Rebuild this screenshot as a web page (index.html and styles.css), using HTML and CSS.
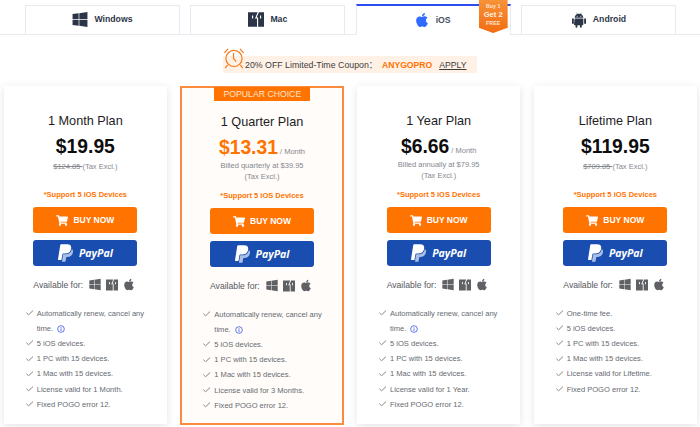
FILE: index.html
```html
<!DOCTYPE html>
<html lang="en">
<head>
    <meta charset="UTF-8">
    <meta name="viewport" content="width=device-width, initial-scale=1.0">
    <title>AnyGo Pricing</title>
    <link rel="stylesheet" href="styles.css">
</head>
<body>
    <svg class="icon-defs" width="0" height="0" aria-hidden="true">
        <symbol id="i-windows" viewBox="0 0 448 512"><path d="M0 93.7l183.6-25.3v177.4H0V93.7zm0 324.6l183.6 25.3V268.4H0v149.9zm203.8 28L448 480V268.4H203.8v177.9zm0-380.6v180.1H448V32L203.8 65.7z"/></symbol>
        <symbol id="i-apple" viewBox="0 0 384 512"><path d="M318.7 268.7c-.2-36.7 16.4-64.4 50-84.8-18.8-26.9-47.2-41.7-84.7-44.6-35.5-2.8-74.3 20.7-88.5 20.7-15 0-49.4-19.7-76.4-19.7C63.3 141.2 4 184.8 4 273.5q0 39.3 14.4 81.2c12.8 36.7 59 126.7 107.2 125.2 25.2-.6 43-17.9 75.8-17.9 31.8 0 48.3 17.9 76.4 17.9 48.6-.7 90.4-82.5 102.6-119.3-65.2-30.7-61.7-90-61.7-91.9zm-56.6-164.2c27.3-32.4 24.8-61.9 24-72.5-24.1 1.4-52 16.4-67.9 34.9-17.5 19.8-27.8 44.3-25.6 71.9 26.1 2 49.9-11.4 69.5-34.3z"/></symbol>
        <symbol id="i-mac" viewBox="0 0 24 24"><path fill-rule="evenodd" d="M0 1h24v22H0zM14.500 1l-4 9.500h3V23h1.700V9h-2.200L16.300 1zM6 6v4.500h1.700V6zM18 6v4.500h1.700V6z"/></symbol>
        <symbol id="i-android" viewBox="0 0 24 24"><path d="M5.500 9.500C5.700 6.900 7.200 4.900 9.300 3.900L8.100 1.800l.5-.3 1.300 2.100c1.300-.5 2.900-.5 4.200 0l1.300-2.100.5.300-1.200 2.100c2.100 1 3.600 3 3.800 5.600zM9.300 6.200a.8.8 0 100 1.600.8.8 0 000-1.600zm5.400 0a.8.800 0 100 1.600.8.8 0 000-1.600zM5.500 10.400h13v8.700c0 .8-.6 1.400-1.400 1.400h-.9V23a1.400 1.400 0 01-2.800 0v-2.500h-3.800V23a1.400 1.400 0 01-2.800 0v-2.500h-.9c-.8 0-1.400-.6-1.400-1.400zM2.900 10.200c.8 0 1.400.6 1.400 1.400v5.600a1.400 1.400 0 01-2.800 0v-5.600c0-.8.6-1.400 1.400-1.400zm18.200 0c.8 0 1.400.6 1.400 1.400v5.600a1.400 1.400 0 01-2.800 0v-5.600c0-.8.6-1.400 1.400-1.400z"/></symbol>
        <symbol id="i-cart" viewBox="0 0 576 512"><path d="M528.12 301.319l47.273-208C578.806 78.301 567.391 64 551.99 64H159.208l-9.166-44.81C147.758 8.021 137.93 0 126.529 0H24C10.745 0 0 10.745 0 24v16c0 13.255 10.745 24 24 24h69.883l70.248 343.435C147.325 417.1 136 435.222 136 456c0 30.928 25.072 56 56 56s56-25.072 56-56c0-15.674-6.447-29.835-16.824-40h209.647C430.447 426.165 424 440.326 424 456c0 30.928 25.072 56 56 56s56-25.072 56-56c0-22.172-12.888-41.332-31.579-50.405l5.517-24.276c3.413-15.018-8.002-29.319-23.403-29.319H218.117l-6.545-32h293.145c11.206 0 20.92-7.754 23.403-18.681z"/></symbol>
        <symbol id="i-paypal" viewBox="0 0 384 512">
            <path fill="#a9bfe6" d="M357.1 152c-1.800-1.300-2.500-1.800-3 1.300-2 11.400-5.100 22.500-8.800 33.600-39.900 113.800-150.500 103.900-204.500 103.900-6.100 0-10.100 3.300-10.900 9.400-22.600 140.400-27.100 169.700-27.100 169.700-1 7.100 3.500 12.900 10.600 12.900h63.500c8.600 0 15.700-6.300 17.400-14.900.7-5.400-1.100 6.100 14.400-91.300 4.600-22 14.300-19.700 29.300-19.700 71 0 126.400-28.800 142.900-112.300 6.500-34.800 4.600-71.400-23.800-92.600z"/>
            <path fill="#fff" d="M111.400 295.900c-3.500 19.200-17.400 108.700-21.500 134-.3 1.800-1 2.500-3 2.500H12.300c-7.600 0-13.100-6.600-12.100-13.900L58.800 46.600c1.500-9.600 10.100-16.900 20-16.900 152.300 0 165.100-3.700 204 11.400 60.100 23.300 65.600 79.500 44 140.300-21.500 62.600-72.500 89.500-140.100 90.300-43.400.7-69.500-7-75.300 24.200z"/>
        </symbol>
        <symbol id="i-check" viewBox="0 0 8 6"><path d="M.4 3l2.300 2.300L7.600.6" fill="none" stroke="currentColor" stroke-width=".8"/></symbol>
        <symbol id="i-info" viewBox="0 0 12 12"><circle cx="6" cy="6" r="5" fill="none" stroke="currentColor" stroke-width="1.200"/><path d="M5.400 5h1.200v4H5.400zM5.400 3h1.200v1.200H5.400z"/></symbol>
    </svg>

    <!-- os tabs -->
    <nav class="tabs">
        <a class="tab"><svg class="tab-icon"><use href="#i-windows"/></svg>Windows</a>
        <a class="tab"><svg class="tab-icon"><use href="#i-mac"/></svg>Mac</a>
        <a class="tab tab-active"><svg class="tab-icon"><use href="#i-apple"/></svg>iOS
            <span class="promo-badge"><span class="promo-small">Buy 1</span><span class="promo-big">Get 2</span><span class="promo-small">FREE</span></span>
        </a>
        <a class="tab"><svg class="tab-icon"><use href="#i-android"/></svg>Android</a>
    </nav>

    <!-- coupon -->
    <div class="coupon-row">
        <div class="coupon">
            <svg class="coupon-clock" viewBox="0 0 24 24" fill="none" stroke="#f57a1c" stroke-width="1.300">
                <circle cx="12" cy="12.500" r="8.800"/>
                <path d="M11.500 6.500v6l3 3.500M1.500 6.500L5.500 2M22.500 6.500L18.500 2M5 19.500L2.500 23M19 19.500L21.500 23"/>
            </svg>
            <span class="coupon-text">20% OFF Limited-Time Coupon：</span>
            <strong class="coupon-code">ANYGOPRO</strong>
            <a class="coupon-apply">APPLY</a>
        </div>
    </div>

    <!-- plans -->
    <main class="plans">
        <section class="plan">
            <h2 class="plan-name">1 Month Plan</h2>
            <div class="plan-price"><b>$19.95</b></div>
            <p class="plan-note plan-note-single"><s>$124.85 </s>(Tax Excl.)</p>
            <p class="plan-support">*Support 5 iOS Devices</p>
            <a class="btn btn-buy"><svg class="cart"><use href="#i-cart"/></svg>BUY NOW</a>
            <a class="btn btn-paypal"><svg class="pp"><use href="#i-paypal"/></svg><em>PayPal</em></a>
            <div class="avail">Available for:
                <svg class="a-win"><use href="#i-windows"/></svg><svg class="a-mac"><use href="#i-mac"/></svg><svg class="a-apple"><use href="#i-apple"/></svg>
            </div>
            <ul class="features">
                <li><svg class="check"><use href="#i-check"/></svg>Automatically renew, cancel any time. <svg class="info"><use href="#i-info"/></svg></li>
                <li><svg class="check"><use href="#i-check"/></svg>5 iOS devices.</li>
                <li><svg class="check"><use href="#i-check"/></svg>1 PC with 15 devices.</li>
                <li><svg class="check"><use href="#i-check"/></svg>1 Mac with 15 devices.</li>
                <li><svg class="check"><use href="#i-check"/></svg>License valid for 1 Month.</li>
                <li><svg class="check"><use href="#i-check"/></svg>Fixed POGO error 12.</li>
            </ul>
        </section>

        <section class="plan plan-popular">
            <div class="popular-flag">POPULAR CHOICE</div>
            <h2 class="plan-name">1 Quarter Plan</h2>
            <div class="plan-price"><b>$13.31</b><span> / Month</span></div>
            <p class="plan-note">Billed quarterly at $39.95<br>(Tax Excl.)</p>
            <p class="plan-support">*Support 5 iOS Devices</p>
            <a class="btn btn-buy"><svg class="cart"><use href="#i-cart"/></svg>BUY NOW</a>
            <a class="btn btn-paypal"><svg class="pp"><use href="#i-paypal"/></svg><em>PayPal</em></a>
            <div class="avail">Available for:
                <svg class="a-win"><use href="#i-windows"/></svg><svg class="a-mac"><use href="#i-mac"/></svg><svg class="a-apple"><use href="#i-apple"/></svg>
            </div>
            <ul class="features">
                <li><svg class="check"><use href="#i-check"/></svg>Automatically renew, cancel any time. <svg class="info"><use href="#i-info"/></svg></li>
                <li><svg class="check"><use href="#i-check"/></svg>5 iOS devices.</li>
                <li><svg class="check"><use href="#i-check"/></svg>1 PC with 15 devices.</li>
                <li><svg class="check"><use href="#i-check"/></svg>1 Mac with 15 devices.</li>
                <li><svg class="check"><use href="#i-check"/></svg>License valid for 3 Months.</li>
                <li><svg class="check"><use href="#i-check"/></svg>Fixed POGO error 12.</li>
            </ul>
        </section>

        <section class="plan">
            <h2 class="plan-name">1 Year Plan</h2>
            <div class="plan-price"><b>$6.66</b><span> / Month</span></div>
            <p class="plan-note">Billed annually at $79.95<br>(Tax Excl.)</p>
            <p class="plan-support">*Support 5 iOS Devices</p>
            <a class="btn btn-buy"><svg class="cart"><use href="#i-cart"/></svg>BUY NOW</a>
            <a class="btn btn-paypal"><svg class="pp"><use href="#i-paypal"/></svg><em>PayPal</em></a>
            <div class="avail">Available for:
                <svg class="a-win"><use href="#i-windows"/></svg><svg class="a-mac"><use href="#i-mac"/></svg><svg class="a-apple"><use href="#i-apple"/></svg>
            </div>
            <ul class="features">
                <li><svg class="check"><use href="#i-check"/></svg>Automatically renew, cancel any time. <svg class="info"><use href="#i-info"/></svg></li>
                <li><svg class="check"><use href="#i-check"/></svg>5 iOS devices.</li>
                <li><svg class="check"><use href="#i-check"/></svg>1 PC with 15 devices.</li>
                <li><svg class="check"><use href="#i-check"/></svg>1 Mac with 15 devices.</li>
                <li><svg class="check"><use href="#i-check"/></svg>License valid for 1 Year.</li>
                <li><svg class="check"><use href="#i-check"/></svg>Fixed POGO error 12.</li>
            </ul>
        </section>

        <section class="plan">
            <h2 class="plan-name">Lifetime Plan</h2>
            <div class="plan-price"><b>$119.95</b></div>
            <p class="plan-note plan-note-single"><s>$709.85 </s>(Tax Excl.)</p>
            <p class="plan-support">*Support 5 iOS Devices</p>
            <a class="btn btn-buy"><svg class="cart"><use href="#i-cart"/></svg>BUY NOW</a>
            <a class="btn btn-paypal"><svg class="pp"><use href="#i-paypal"/></svg><em>PayPal</em></a>
            <div class="avail">Available for:
                <svg class="a-win"><use href="#i-windows"/></svg><svg class="a-mac"><use href="#i-mac"/></svg><svg class="a-apple"><use href="#i-apple"/></svg>
            </div>
            <ul class="features">
                <li><svg class="check"><use href="#i-check"/></svg>One-time fee.</li>
                <li><svg class="check"><use href="#i-check"/></svg>5 iOS devices.</li>
                <li><svg class="check"><use href="#i-check"/></svg>1 PC with 15 devices.</li>
                <li><svg class="check"><use href="#i-check"/></svg>1 Mac with 15 devices.</li>
                <li><svg class="check"><use href="#i-check"/></svg>License valid for Lifetime.</li>
                <li><svg class="check"><use href="#i-check"/></svg>Fixed POGO error 12.</li>
            </ul>
        </section>
    </main>
</body>
</html>
```

FILE: styles.css
```css
:root {
    --orange: #ff7300;
    --line: #e8eaef;
    --ink: #2c3547;
    --grey: #85888f;
    --body: #666a71;
}

* {
    box-sizing: border-box;
    margin: 0;
    padding: 0;
}

html, body {
    height: 427px;
    overflow: hidden;
}

body {
    background: #fff;
    color: var(--body);
    font-family: 'Liberation Sans', Arial, 'Noto Sans CJK SC', sans-serif;
}

.icon-defs {
    display: block;
    height: 0;
}

/* tabs */
.tabs {
    display: grid;
    grid-template-columns: repeat(4, 155px);
    column-gap: 10.330px;
    padding: 5px 0 0 25px;
    height: 35px;
    border-bottom: 1px solid var(--line);
}

.tab {
    display: flex;
    align-items: center;
    justify-content: center;
    gap: 6px;
    height: 29px;
    padding-bottom: 2px;
    border: 1px solid var(--line);
    border-bottom: none;
    background: #fff;
    color: var(--ink);
    font-size: 8.700px;
    font-weight: 700;
    fill: var(--ink);
}

.tab-icon {
    width: 16px;
    height: 17px;
}

.tab-active {
    position: relative;
    height: 31px;
    margin-top: -1px;
    gap: 8px;
    border-top: 2px solid #2b4df0;
    color: #44505f;
    fill: #2f6bff;
}

.tab-active .tab-icon {
    height: 16px;
    width: 12px;
}

.promo-badge {
    position: absolute;
    top: -6px;
    right: 2px;
    width: 29px;
    height: 33px;
    display: flex;
    flex-direction: column;
    align-items: center;
    justify-content: flex-start;
    padding-top: 3px;
    background: linear-gradient(#f79238, #f26c12);
    clip-path: polygon(0 0, 100% 0, 100% 84%, 50% 100%, 0 84%);
    color: #fff;
    font-weight: 700;
}

.promo-small {
    font-size: 5.300px;
    line-height: 7px;
    color: #ffe4cc;
}

.promo-big {
    font-size: 7.600px;
    line-height: 10px;
    color: #fff1e4;
}

/* coupon */
.coupon-row {
    display: flex;
    justify-content: center;
    padding-top: 21px;
    height: 51px;
}

.coupon {
    position: relative;
    display: flex;
    align-items: center;
    width: 254px;
    height: 17px;
    padding-left: 22px;
    background: #fff1e6;
    color: #3d3d3d;
    border-radius: 1px;
    white-space: nowrap;
}

.coupon-text {
    width: 137px;
    font-size: 8.800px;
}

.coupon-clock {
    position: absolute;
    left: 0;
    top: -9px;
    width: 22px;
    height: 22px;
}

.coupon-code {
    color: var(--orange);
    font-size: 8.600px;
}

.coupon-apply {
    margin-left: 7px;
    color: #3d3d3d;
    font-size: 8.700px;
    text-decoration: underline;
}

/* plans */
.plans {
    display: grid;
    grid-template-columns: repeat(4, 1fr);
    column-gap: 13.300px;
    padding: 0 3px 0 3.700px;
    align-items: start;
}

.plan {
    position: relative;
    height: 338px;
    padding: 27px 0 0;
    background: #fff;
    box-shadow: 0 2px 8px rgba(40, 50, 70, .13);
    display: flex;
    flex-direction: column;
    align-items: center;
}

.plan-popular {
    height: 339px;
    padding-top: 26px;
    border: 2px solid #fa8b3f;
    background: #fffcf9;
    box-shadow: none;
}

.popular-flag {
    position: absolute;
    top: -1px;
    left: 32px;
    width: 96px;
    height: 14px;
    background: var(--orange);
    color: #ffe4d0;
    font-size: 8.700px;
    line-height: 14px;
    text-align: center;
}

.plan-name {
    font-size: 12.700px;
    line-height: 16px;
    font-weight: 400;
    color: #1d1d1f;
}

.plan-price {
    margin-top: 5px;
    height: 26px;
    line-height: 26px;
    color: var(--grey);
    font-size: 7.500px;
    white-space: nowrap;
}

.plan-price b {
    font-size: 19.300px;
    color: #0d0d0f;
}

.plan-popular .plan-price b {
    color: var(--orange);
}

.plan-note {
    height: 30px;
    color: var(--grey);
    font-size: 7.500px;
    line-height: 10.500px;
    text-align: center;
}

.plan-note-single {
    padding-top: 2px;
}

.plan-support {
    color: var(--orange);
    font-size: 7.500px;
    font-weight: 700;
    line-height: 10px;
}

.btn {
    display: flex;
    align-items: center;
    justify-content: center;
    width: 104px;
    height: 26px;
    border-radius: 3px;
    color: #fff;
    fill: #fff;
}

.btn-buy {
    margin-top: 7px;
    background: var(--orange);
    font-size: 8.500px;
    font-weight: 700;
    gap: 5px;
}

.btn-paypal {
    margin-top: 6.500px;
    background: #1a4db0;
    gap: 6px;
}

.btn-paypal em {
    font-family: 'Open Sans', sans-serif;
    font-size: 10.500px;
    font-weight: 700;
}

.cart {
    width: 12px;
    height: 11px;
}

.pp {
    width: 15px;
    height: 20px;
}

.avail {
    display: flex;
    align-items: center;
    width: 104px;
    height: 14px;
    margin-top: 12px;
    font-size: 8.650px;
    color: #55585e;
    fill: #5f6165;
    white-space: nowrap;
}

.a-win { width: 12px; height: 13px; margin-left: 6px; }
.a-mac { width: 12px; height: 12px; margin-left: 5px; }
.a-apple { width: 10px; height: 13px; margin-left: 6px; }

.features {
    list-style: none;
    width: 100%;
    margin-top: 14px;
    padding: 0 20px 0 33px;
    font-size: 7.550px;
    line-height: 15.200px;
    color: var(--body);
}

.plan-popular .features {
    padding-left: 32px;
    padding-right: 18px;
}

.features li {
    position: relative;
}

.check {
    position: absolute;
    left: -11px;
    top: 4.500px;
    width: 7.500px;
    height: 5.500px;
    color: #555;
}

.info {
    width: 8px;
    height: 8px;
    margin-left: 2px;
    vertical-align: -2px;
    color: #3e57e6;
    fill: #3e57e6;
}
```
